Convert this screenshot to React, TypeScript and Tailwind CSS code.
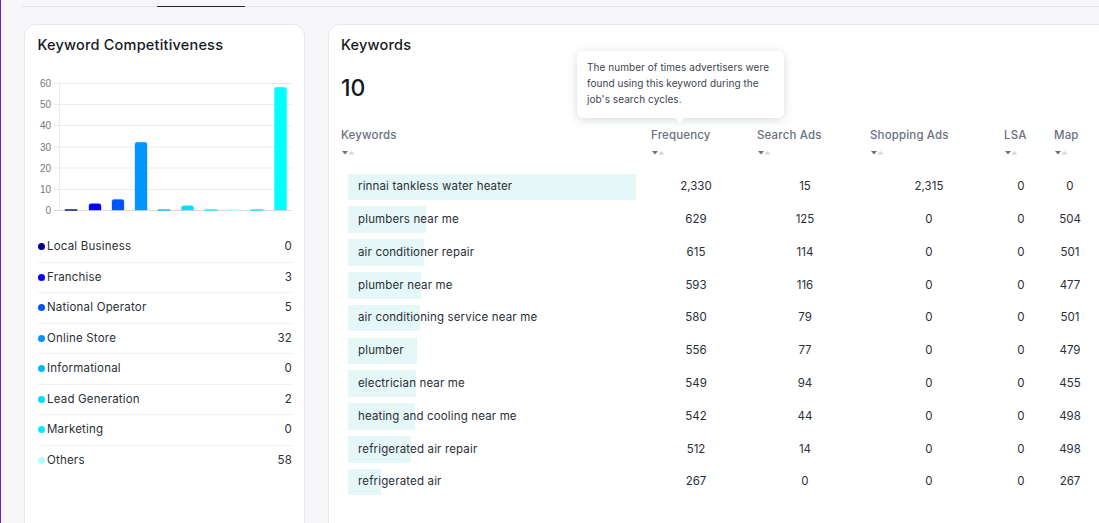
const font = "font-['Inter','Liberation_Sans',sans-serif]";

const legend = [
  { name: 'Local Business', value: 0, color: 'bg-[#00008b]' },
  { name: 'Franchise', value: 3, color: 'bg-[#0000ff]' },
  { name: 'National Operator', value: 5, color: 'bg-[#0055ff]' },
  { name: 'Online Store', value: 32, color: 'bg-[#0095ff]' },
  { name: 'Informational', value: 0, color: 'bg-[#00bbff]' },
  { name: 'Lead Generation', value: 2, color: 'bg-[#00ddff]' },
  { name: 'Marketing', value: 0, color: 'bg-[#00eeff]' },
  { name: 'Others', value: 58, color: 'bg-[#aaffff]' },
];

const bars = [
  { x: 65, value: 0, fill: '#00008b' },
  { x: 89, value: 3, fill: '#0000ff' },
  { x: 112, value: 5, fill: '#0055ff' },
  { x: 135, value: 32, fill: '#0095ff' },
  { x: 158, value: 0, fill: '#00bbff' },
  { x: 181.5, value: 2, fill: '#00ddff' },
  { x: 205, value: 0, fill: '#00eeff' },
  { x: 228, value: 0, fill: '#aaffff' },
  { x: 251, value: 0, fill: '#00eeff' },
  { x: 274.5, value: 58, fill: '#00ffff' },
];

const gridLines = [
  { y: 83.5, label: '60' },
  { y: 104.5, label: '50' },
  { y: 125.5, label: '40' },
  { y: 147, label: '30' },
  { y: 168, label: '20' },
  { y: 189.5, label: '10' },
  { y: 210.5, label: '0' },
];

const rows = [
  { keyword: 'rinnai tankless water heater', freq: 2330, search: '15', shopping: '2,315', lsa: '0', map: '0' },
  { keyword: 'plumbers near me', freq: 629, search: '125', shopping: '0', lsa: '0', map: '504' },
  { keyword: 'air conditioner repair', freq: 615, search: '114', shopping: '0', lsa: '0', map: '501' },
  { keyword: 'plumber near me', freq: 593, search: '116', shopping: '0', lsa: '0', map: '477' },
  { keyword: 'air conditioning service near me', freq: 580, search: '79', shopping: '0', lsa: '0', map: '501' },
  { keyword: 'plumber', freq: 556, search: '77', shopping: '0', lsa: '0', map: '479' },
  { keyword: 'electrician near me', freq: 549, search: '94', shopping: '0', lsa: '0', map: '455' },
  { keyword: 'heating and cooling near me', freq: 542, search: '44', shopping: '0', lsa: '0', map: '498' },
  { keyword: 'refrigerated air repair', freq: 512, search: '14', shopping: '0', lsa: '0', map: '498' },
  { keyword: 'refrigerated air', freq: 267, search: '0', shopping: '0', lsa: '0', map: '267' },
];

function SortIcon() {
  return (
    <svg width="14" height="5" viewBox="0 0 14 5" className="block ml-[1px]">
      <path d="M0 1h6L3 4.5z" fill="#6b7280" />
      <path d="M6.5 4.5h6L9.5 1z" fill="#d1d5db" />
    </svg>
  );
}

function Chart() {
  return (
    <svg width="254" height="142" viewBox="38 75 254 142" className="block">
      {gridLines.map((g) => (
        <g key={g.label}>
          <line x1="54" x2="292" y1={g.y} y2={g.y} stroke={g.label === '0' ? '#d9d9d9' : '#ebebeb'} />
          <text x="51" y={g.y + 3.5} textAnchor="end" fontSize="10" fill="#777" fontFamily="Liberation Sans">
            {g.label}
          </text>
        </g>
      ))}
      <line x1="59.5" x2="59.5" y1="83" y2="210" stroke="#ebebeb" />
      {bars.map((b) =>
        b.value === 0 ? (
          <rect key={b.x} x={b.x} y="209.5" width="12" height="1" fill={b.fill} stroke={b.fill} strokeOpacity="0.35" />
        ) : (
          <path
            key={b.x}
            d={`M${b.x} 210v${-((b.value / 60) * 127 - 2)}q0 -2 2 -2h8q2 0 2 2v${(b.value / 60) * 127 - 2}z`}
            fill={b.fill}
            stroke={b.fill}
            strokeOpacity="0.35"
          />
        ),
      )}
    </svg>
  );
}

function Tooltip() {
  return (
    <div className="absolute left-[248px] top-[26px] w-[207px] h-[67px] rounded-md bg-white pl-[10px] pt-[8px] text-[10px] leading-[16px] tracking-[0.06px] text-[#40454d] shadow-[0_2px_10px_rgba(70,90,100,0.22)]">
      <p className="whitespace-nowrap">The number of times advertisers were</p>
      <p className="whitespace-nowrap">found using this keyword during the</p>
      <p className="whitespace-nowrap">job's search cycles.</p>
      <div className="absolute left-[99px] bottom-[-3px] w-[7px] h-[7px] rotate-45 bg-white" />
    </div>
  );
}

const columns = [
  { title: 'Frequency', width: 'w-[106px]' },
  { title: 'Search Ads', width: 'w-[113px]' },
  { title: 'Shopping Ads', width: 'w-[134px]' },
  { title: 'LSA', width: 'w-[50px]' },
  { title: 'Map', width: 'w-[60px]' },
];

export default function App() {
  return (
    <div className={`${font} w-[1099px] h-[523px] overflow-hidden bg-[#f7f7fa] border-l border-[#6d1fd1] text-[#2b2f36]`}>
      <div className="ml-[21px] h-[7px] border-b border-[#e3e3e8]">
        <div className="ml-[135px] w-[88px] h-[7px] border-b border-[#22262b]" />
      </div>

      <div className="flex gap-[23px] pl-[23px] pt-[17px]">
        <div className="shrink-0 w-[281px] h-[600px] rounded-xl border border-[#e8e9ee] bg-white px-[13px]">
          <h2 className="h-[37px] pt-[10px] -ml-[0.5px] text-[14.5px] leading-[19px] font-medium text-[#15191e] tracking-[0.2px] whitespace-nowrap">
            Keyword Competitiveness
          </h2>
          <div className="mt-[13px]">
            <Chart />
          </div>
          <ul className="mt-[15px] w-[254px]">
            {legend.map((item) => (
              <li
                key={item.name}
                className="flex h-[30.5px] items-center justify-between border-b border-[#f1f1f3] last:border-b-0 text-[11.5px] tracking-[0.2px]"
              >
                <span className="flex items-center gap-[2px]">
                  <span className={`w-[7px] h-[7px] rounded-full ${item.color}`} />
                  {item.name}
                </span>
                <span>{item.value}</span>
              </li>
            ))}
          </ul>
        </div>

        <div className="relative shrink-0 w-[800px] h-[600px] rounded-tl-xl border border-[#e8e9ee] bg-white pl-[12px]">
          <Tooltip />
          <h2 className="h-[37px] pt-[10px] text-[14.5px] leading-[19px] font-medium text-[#15191e] tracking-[0.2px]">Keywords</h2>
          <div className="h-[27px] mt-[13px] text-[23px] leading-[27px] font-medium text-[#15191e]">10</div>

          <div className="flex mt-[24.5px] text-[11.5px] leading-[16px] font-medium tracking-[0.15px] text-[#6b7280]">
            <div className="w-[310px]">
              <div>Keywords</div>
              <div className="mt-[7px]"><SortIcon /></div>
            </div>
            {columns.map((col) => (
              <div key={col.title} className={col.width}>
                <div className="whitespace-nowrap">{col.title}</div>
                <div className="mt-[7px]"><SortIcon /></div>
              </div>
            ))}
          </div>

          <div className="mt-[16px] text-[11.5px]">
            {rows.map((row) => (
              <div key={row.keyword} className="flex items-center h-[32.8px]">
                <div className="w-[310px] pl-[7px]">
                  <div className="relative h-[26.5px] flex items-center pl-[10px]">
                    <div
                      className="absolute left-0 top-0 h-full bg-[#e5f8f7]"
                      style={{ width: `${(row.freq / 2330) * 288}px` }}
                    />
                    <span className="relative whitespace-nowrap tracking-[0.15px]">{row.keyword}</span>
                  </div>
                </div>
                <div className="w-[106px]"><div className="w-[90px] text-center">{row.freq.toLocaleString('en-US')}</div></div>
                <div className="w-[113px]"><div className="w-[96px] text-center">{row.search}</div></div>
                <div className="w-[134px]"><div className="w-[118px] text-center">{row.shopping}</div></div>
                <div className="w-[50px]"><div className="w-[34px] text-center">{row.lsa}</div></div>
                <div className="w-[60px]"><div className="w-[32px] text-center">{row.map}</div></div>
              </div>
            ))}
          </div>
        </div>
      </div>
    </div>
  );
}
